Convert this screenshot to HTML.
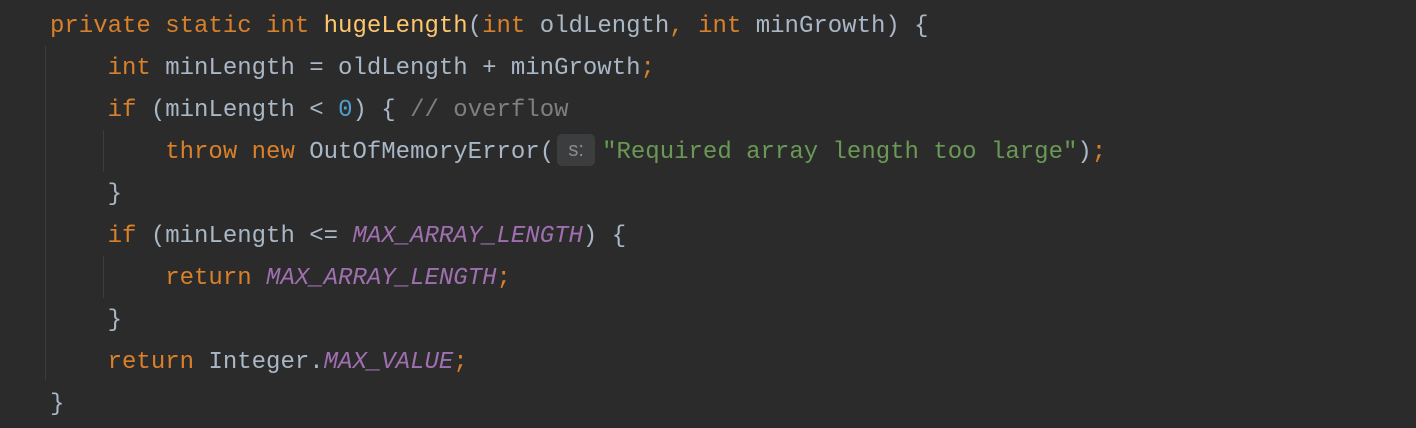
<!DOCTYPE html>
<html><head><meta charset="utf-8"><style>
html,body{margin:0;padding:0;background:#2b2b2b;width:1416px;height:428px;overflow:hidden}
.c{position:absolute;left:50px;top:6px;font-family:"Liberation Mono",monospace;font-size:24px;color:#a9b7c6}
.l{height:42px;line-height:42px;white-space:pre}
.k{color:#d9802b}.m{color:#ffc66d}.n{color:#4f9fcf}.cm{color:#7f7f7f}.s{color:#6a9955}.p{color:#a06fb0;font-style:italic}
.h{display:inline-block;background:#3b3d3f;color:#8c8c8c;font-size:20px;line-height:32px;height:32px;width:38px;text-align:center;border-radius:5px;margin:0 7px 0 3px;vertical-align:middle;position:relative;top:-2px;font-family:"Liberation Sans",sans-serif}
.g{position:absolute;width:1px;background:#3c3c3c}
</style></head><body>
<div class="g" style="left:45px;top:46px;height:334px"></div>
<div class="g" style="left:103px;top:130px;height:42px"></div>
<div class="g" style="left:103px;top:256px;height:42px"></div>
<div class="c"><div class="l"><span class="k">private static int </span><span class="m">hugeLength</span>(<span class="k">int </span>oldLength<span class="k">, int </span>minGrowth) {</div><div class="l">    <span class="k">int </span>minLength = oldLength + minGrowth<span class="k">;</span></div><div class="l">    <span class="k">if </span>(minLength &lt; <span class="n">0</span>) { <span class="cm">// overflow</span></div><div class="l">        <span class="k">throw new </span>OutOfMemoryError(<span class="h">s:</span><span class="s">"Required array length too large"</span>)<span class="k">;</span></div><div class="l">    }</div><div class="l">    <span class="k">if </span>(minLength &lt;= <span class="p">MAX_ARRAY_LENGTH</span>) {</div><div class="l">        <span class="k">return </span><span class="p">MAX_ARRAY_LENGTH</span><span class="k">;</span></div><div class="l">    }</div><div class="l">    <span class="k">return </span>Integer.<span class="p">MAX_VALUE</span><span class="k">;</span></div><div class="l">}</div></div>
</body></html>
